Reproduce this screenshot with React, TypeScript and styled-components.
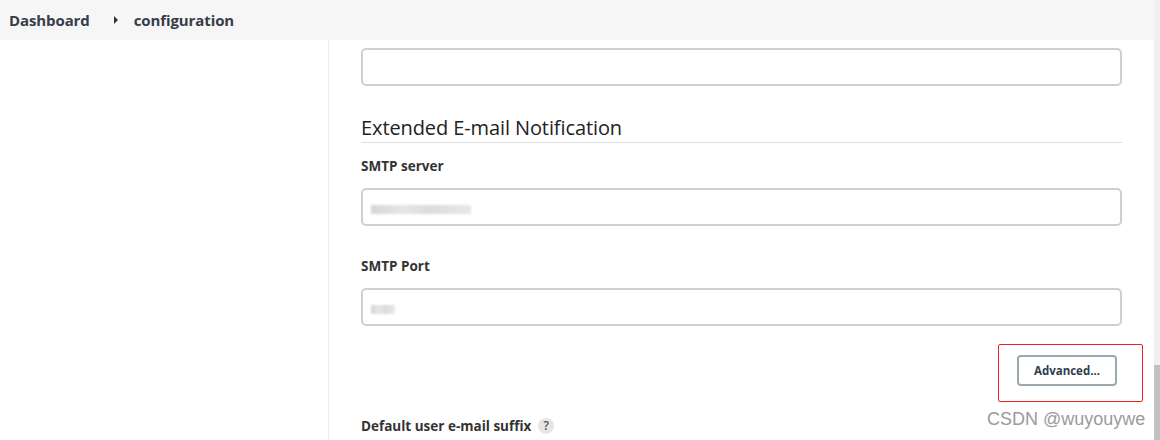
import React from "react";
import styled, { createGlobalStyle } from "styled-components";

const Global = createGlobalStyle`
  html, body { margin: 0; padding: 0; overflow: hidden; background: #fff; }
  body { font-family: "Segoe UI", "Open Sans", "Noto Sans", sans-serif; color: #333; }
  * { box-sizing: border-box; }
`;

const Shell = styled.div`
  position: relative;
  display: flex;
  width: 1160px;
  height: 440px;
  overflow: hidden;
`;

const Page = styled.div`
  flex: 1;
  display: flex;
  flex-direction: column;
  min-width: 0;
`;

const Header = styled.header`
  height: 40px;
  flex: none;
  background: #f6f6f6;
  display: flex;
  align-items: center;
  padding-left: 9px;
`;

const Crumb = styled.span`
  font-size: 15px;
  font-weight: 700;
  color: #363c48;
  letter-spacing: -0.1px;
`;

const Caret = styled.span`
  display: inline-block;
  width: 0;
  height: 0;
  border-top: 4px solid transparent;
  border-bottom: 4px solid transparent;
  border-left: 4px solid #333;
  margin: 0 16px 0 24px;
`;

const Body = styled.div`
  flex: 1;
  display: flex;
  min-height: 0;
`;

const Sidebar = styled.aside`
  width: 329px;
  flex: none;
  border-right: 1px solid #ececec;
`;

const Main = styled.main`
  flex: 1;
  padding: 8px 32px 0 32px;
  display: flex;
  flex-direction: column;
`;

const Input = styled.div`
  height: 38px;
  border: 2px solid #c9d1d3;
  border-radius: 5px;
  display: flex;
  align-items: center;
  padding-left: 8px;
`;

const Blurred = styled.span<{ $w: number }>`
  display: inline-block;
  width: ${(p) => p.$w}px;
  height: 9px;
  background: linear-gradient(90deg, #d6d6d6 0%, #e6e4ea 30%, #dcdcdc 60%, #e8e8e8 100%);
  filter: blur(1.2px);
  margin-top: 4px;
`;

const Heading = styled.h2`
  margin: 28px 0 0 0;
  font-size: 20px;
  font-weight: 500;
  line-height: 27px;
  padding-bottom: 1px;
  border-bottom: 1px solid #dedede;
  color: #222;
  letter-spacing: -0.1px;
`;

const Label = styled.div<{ $top: number }>`
  margin-top: ${(p) => p.$top}px;
  font-size: 13.5px;
  font-weight: 700;
  line-height: 20px;
  color: #333;
  display: flex;
  align-items: center;
  gap: 7px;
`;

const Field = styled.div`
  margin-top: 12px;
`;

const ButtonRow = styled.div`
  display: flex;
  justify-content: flex-end;
  margin-top: 29px;
  padding-right: 5px;
`;

const Button = styled.button`
  position: relative;
  width: 100px;
  height: 31px;
  border: 2px solid #9ca8b0;
  border-radius: 4px;
  background: #fff;
  font-family: inherit;
  font-size: 11.5px;
  font-weight: 700;
  color: #2f3e4e;
  padding: 0;
`;

const RedMark = styled.span`
  position: absolute;
  left: -21px;
  top: -13px;
  width: 145px;
  height: 58px;
  border: 1px solid #f02020;
  border-radius: 2px;
  pointer-events: none;
`;

const Help = styled.span`
  width: 16px;
  height: 16px;
  border-radius: 50%;
  background: #e6e6e6;
  color: #555;
  font-size: 12px;
  font-weight: 600;
  display: inline-flex;
  align-items: center;
  justify-content: center;
`;

const ScrollBar = styled.div`
  width: 6px;
  flex: none;
  background: #f0f0f0;
  display: flex;
  flex-direction: column;
  justify-content: flex-end;
`;

const Thumb = styled.div`
  height: 75px;
  background: #c1c1c1;
`;

const Watermark = styled.span`
  position: absolute;
  left: 987px;
  top: 409px;
  font-family: "Liberation Sans", Arial, sans-serif;
  font-size: 18px;
  color: #9a9a9a;
  white-space: nowrap;
`;

export default function App() {
  return (
    <>
      <Global />
      <Shell>
        <Page>
          <Header>
            <Crumb>Dashboard</Crumb>
            <Caret />
            <Crumb>configuration</Crumb>
          </Header>
          <Body>
            <Sidebar />
            <Main>
              <Input />
              <Heading>Extended E-mail Notification</Heading>
              <Label $top={13}>SMTP server</Label>
              <Field>
                <Input>
                  <Blurred $w={100} />
                </Input>
              </Field>
              <Label $top={30}>SMTP Port</Label>
              <Field>
                <Input>
                  <Blurred $w={24} />
                </Input>
              </Field>
              <ButtonRow>
                <Button>
                  Advanced...
                  <RedMark />
                </Button>
              </ButtonRow>
              <Label $top={30}>
                Default user e-mail suffix
                <Help>?</Help>
              </Label>
            </Main>
          </Body>
        </Page>
        <ScrollBar>
          <Thumb />
        </ScrollBar>
        <Watermark>CSDN @wuyouywe</Watermark>
      </Shell>
    </>
  );
}
